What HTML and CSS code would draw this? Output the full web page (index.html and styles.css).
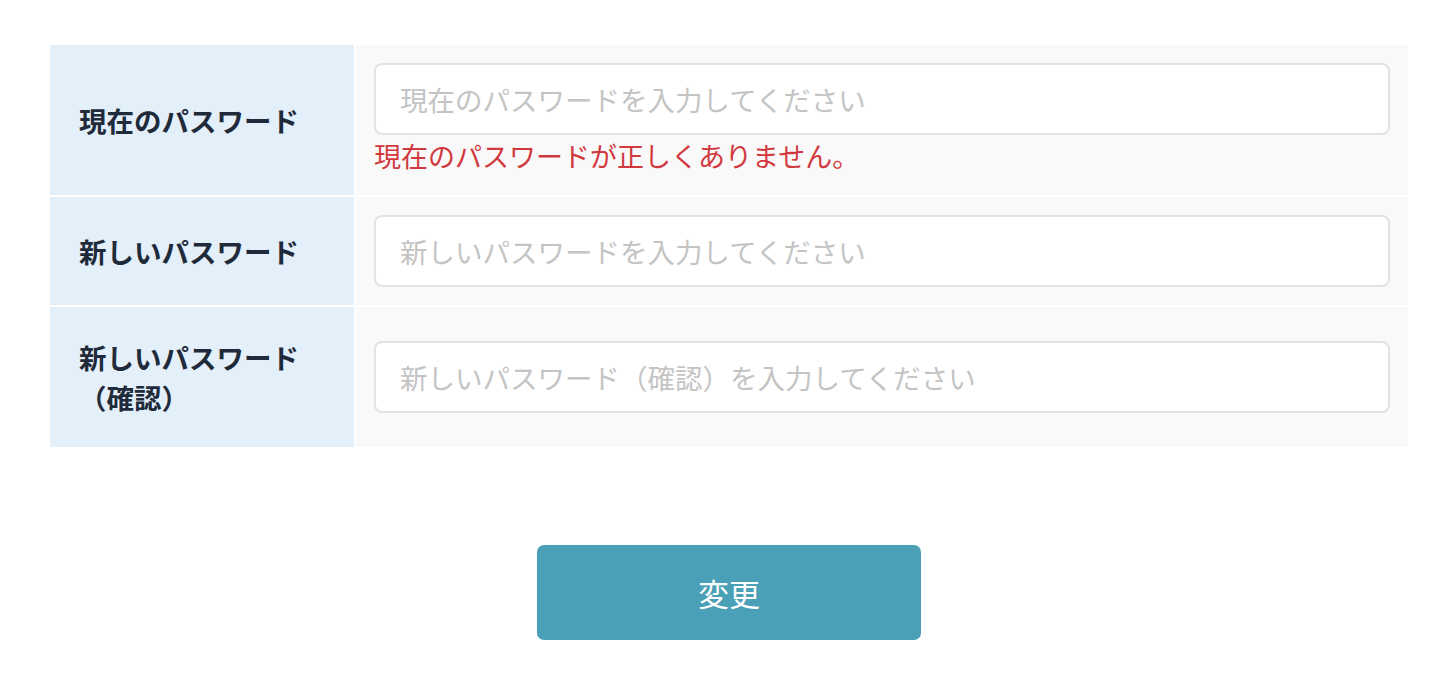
FILE: index.html
```html
<!DOCTYPE html>
<html lang="ja">
<head>
    <meta charset="utf-8">
    <title>パスワード変更</title>
    <link rel="stylesheet" href="styles.css">
</head>
<body>
    <div class="container">
        <form class="form-table">
            <div class="label-cell">現在のパスワード</div>
            <div class="value-cell">
                <input class="text-input" type="password" placeholder="現在のパスワードを入力してください">
                <div class="error">現在のパスワードが正しくありません。</div>
            </div>

            <div class="label-cell">新しいパスワード</div>
            <div class="value-cell">
                <input class="text-input" type="password" placeholder="新しいパスワードを入力してください">
            </div>

            <div class="label-cell">新しいパスワード<br>（確認）</div>
            <div class="value-cell">
                <input class="text-input" type="password" placeholder="新しいパスワード（確認）を入力してください">
            </div>
        </form>

        <div class="actions">
            <button class="submit" type="button">変更</button>
        </div>
    </div>
</body>
</html>
```

FILE: styles.css
```css
body {
    margin: 0;
    padding: 0;
    background: #fff;
    font-family: "Noto Sans CJK JP", "Noto Sans", sans-serif;
    color: #1f2b3a;
}
.container {
    margin: 45px 42px 0 50px;
}

.form-table {
    display: grid;
    grid-template-columns: 304px 1fr;
    gap: 2px;
}

.label-cell {
    background: #e3eff9;
    padding: 0 29px;
    display: flex;
    align-items: center;
    font-size: 27.5px;
    font-weight: bold;
    line-height: 40px;
    color: #1f2b3a;
}
.label-cell:nth-last-child(2) {
    padding: 30px 29px;
}

.value-cell {
    background: #f9f9f9;
    padding: 18px;
    display: flex;
    flex-direction: column;
    justify-content: center;
}

.text-input {
    box-sizing: border-box;
    width: 100%;
    height: 72px;
    padding: 0 24px;
    border: 2px solid #dfe3e8;
    border-radius: 8px;
    background: #fff;
    font-family: inherit;
    font-size: 27.5px;
    color: #333;
    outline: none;
}
.text-input::placeholder { color: #c4c4c4; }

.error {
    color: #d2393f;
    font-size: 27px;
    line-height: 42px;
}

.actions {
    display: flex;
    justify-content: center;
    margin-top: 98px;
}
.submit {
    width: 384px;
    height: 95px;
    border: none;
    border-radius: 7px;
    background: #4aa0b6;
    color: #fff;
    font-family: inherit;
    font-size: 31px;
    cursor: pointer;
}
```
